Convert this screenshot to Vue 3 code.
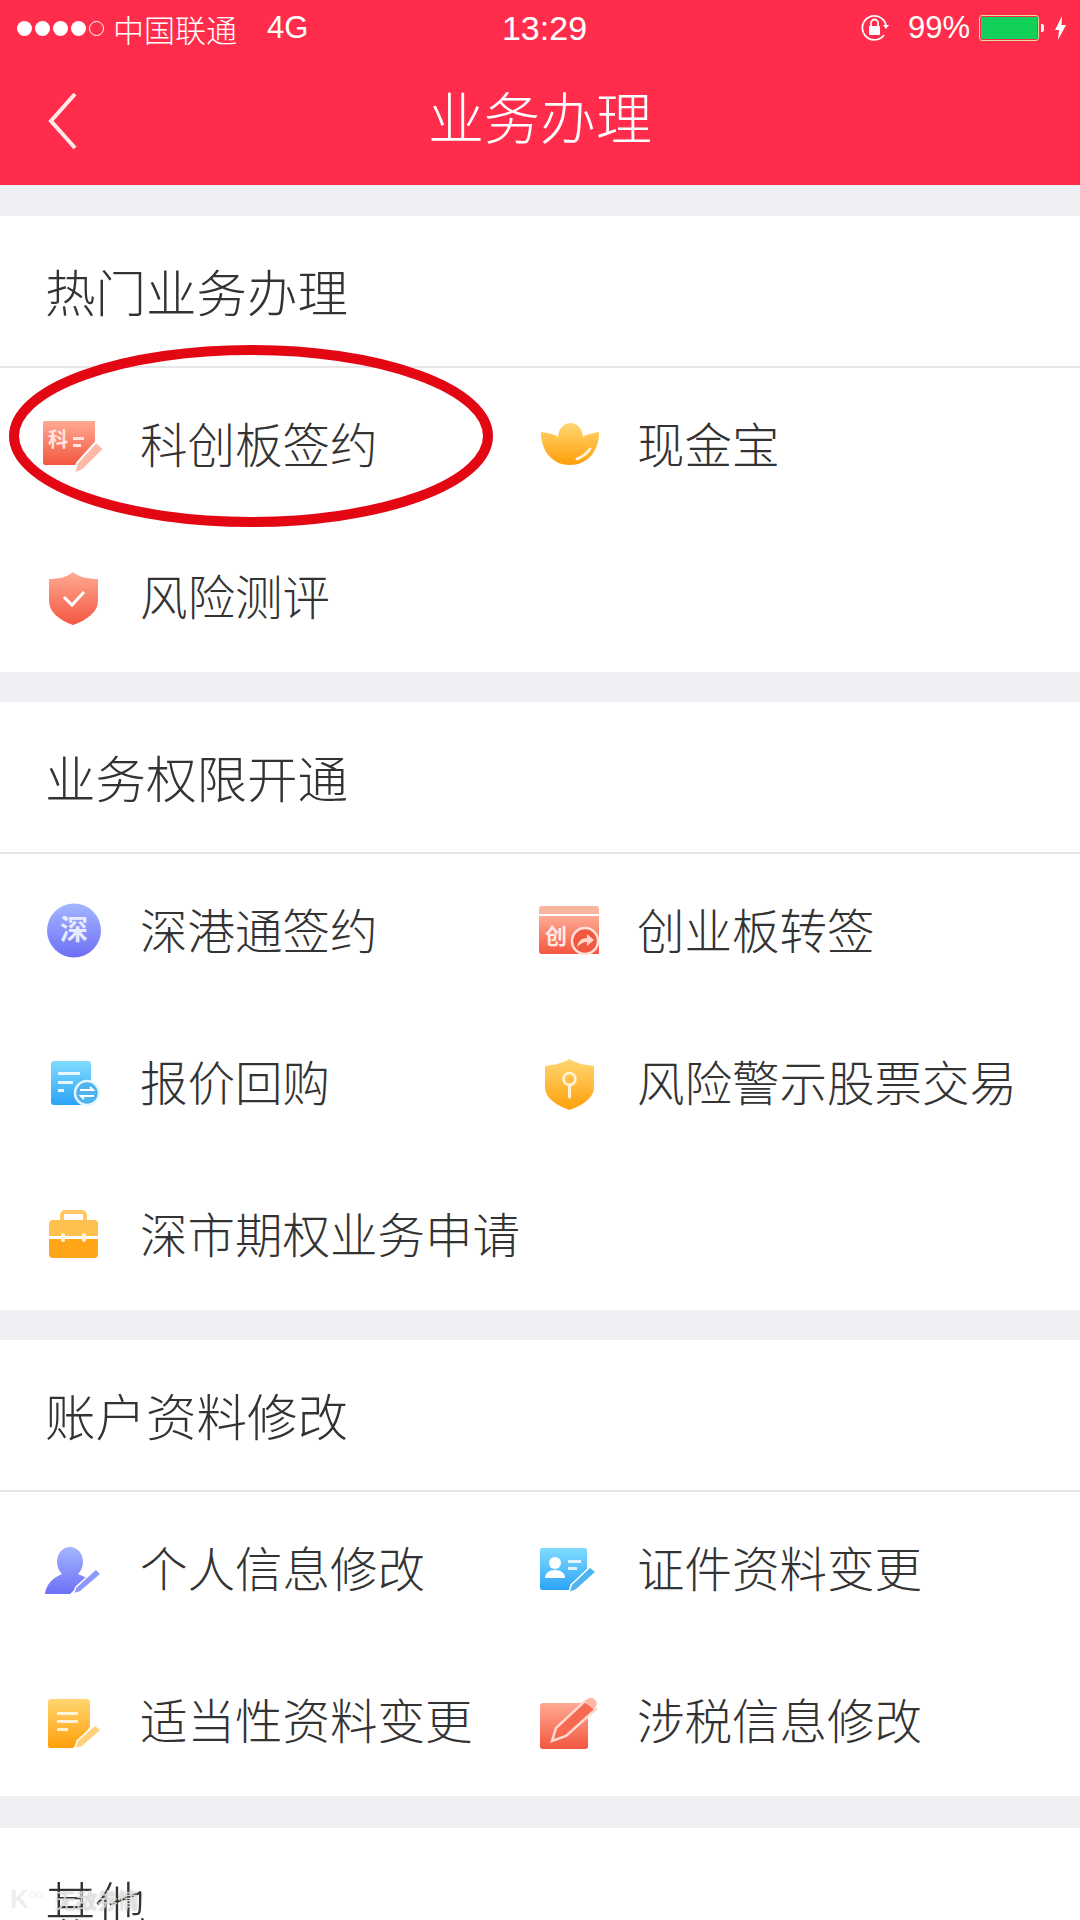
<script setup>
const sections = [
  {
    title: '热门业务办理',
    items: [
      { text: '科创板签约', icon: 'ke' },
      { text: '现金宝', icon: 'gold' },
      { text: '风险测评', icon: 'shield' },
    ],
  },
  {
    title: '业务权限开通',
    items: [
      { text: '深港通签约', icon: 'shen' },
      { text: '创业板转签', icon: 'chuang' },
      { text: '报价回购', icon: 'report' },
      { text: '风险警示股票交易', icon: 'key' },
      { text: '深市期权业务申请', icon: 'case' },
    ],
  },
  {
    title: '账户资料修改',
    items: [
      { text: '个人信息修改', icon: 'person' },
      { text: '证件资料变更', icon: 'idcard' },
      { text: '适当性资料变更', icon: 'note' },
      { text: '涉税信息修改', icon: 'edit' },
    ],
  },
  { title: '其他', items: [] },
]
</script>

<template>
  <div class="page">
    <header class="top">
      <div class="status">
        <div class="status-left">
          <span class="signal">
            <i v-for="n in 4" :key="n" class="dot"></i>
            <i class="dot empty"></i>
          </span>
          <span class="carrier">中国联通</span>
          <span class="net">4G</span>
        </div>
        <div class="time">13:29</div>
        <div class="status-right">
          <svg class="lock" width="30" height="28" viewBox="0 0 30 28">
            <path d="M24 21A12 12 0 1 1 26 11" fill="none" stroke="#fff" stroke-width="1.800" />
            <path d="M23 11h6l-3 4z" fill="#fff" />
            <rect x="9" y="12" width="11" height="9" rx="1" fill="#fff" />
            <path d="M11 12V9a3.500 3.500 0 0 1 7 0v3" fill="none" stroke="#fff" stroke-width="1.800" />
          </svg>
          <span class="pct">99%</span>
          <span class="battery"><i class="battery-fill"></i></span>
          <span class="battery-tip"></span>
          <svg class="bolt" width="11" height="24" viewBox="0 0 11 24">
            <path d="M7 0L0 14h4l-1 10 8-15H6.500z" fill="#fff" />
          </svg>
        </div>
      </div>
      <div class="nav">
        <svg class="back" width="30" height="58" viewBox="0 0 30 58">
          <path d="M27 2L3 29l24 27" fill="none" stroke="#ffe9e9" stroke-width="4" />
        </svg>
        <h1 class="nav-title">业务办理</h1>
        <span></span>
      </div>
    </header>

    <main class="content">
      <section v-for="sec in sections" :key="sec.title" class="card">
        <h2 class="card-title">{{ sec.title }}</h2>
        <div v-if="sec.items.length" class="grid">
          <div v-for="item in sec.items" :key="item.text" class="item">
            <svg class="icon" width="70" height="60" viewBox="0 0 70 60">
              <defs>
                <linearGradient :id="'g-' + item.icon" x1="0" y1="0" x2="0" y2="1">
                  <stop v-if="['ke', 'shield', 'chuang', 'edit'].includes(item.icon)" offset="0" stop-color="#ffaa94" />
                  <stop v-if="['ke', 'shield', 'chuang', 'edit'].includes(item.icon)" offset="1" stop-color="#f3563f" />
                  <stop v-if="['gold', 'key', 'case', 'note'].includes(item.icon)" offset="0" stop-color="#ffd672" />
                  <stop v-if="['gold', 'key', 'case', 'note'].includes(item.icon)" offset="1" stop-color="#ff9f0a" />
                  <stop v-if="['report', 'idcard'].includes(item.icon)" offset="0" stop-color="#80dcff" />
                  <stop v-if="['report', 'idcard'].includes(item.icon)" offset="1" stop-color="#2ba4f6" />
                  <stop v-if="['shen', 'person'].includes(item.icon)" offset="0" stop-color="#a4b6ff" />
                  <stop v-if="['shen', 'person'].includes(item.icon)" offset="1" stop-color="#6d6ff5" />
                </linearGradient>
              </defs>
              <g v-if="item.icon === 'ke'">
                <path d="M9 7h50v26L39 51H9a2 2 0 0 1-2-2V9a2 2 0 0 1 2-2z" fill="url(#g-ke)" />
                <text x="12" y="33" class="glyph" font-size="20" fill="#ffe3dc">科</text>
                <path d="M37 23h11v3H37zM37 30h8v3h-8z" fill="#ffe3dc" />
                <path d="M60 28l8 7-21 21-9 4 3-11z" fill="#ffb8a6" stroke="#fff" stroke-width="2" />
              </g>
              <g v-if="item.icon === 'gold'">
                <path d="M8 18C15 19 21 20 25 23 26 14 31 9 37.500 9 44 9 49 14 50 23 54 20 60 19 66 18 66 38 54 51 37 51 20 51 8 38 8 18z" fill="url(#g-gold)" />
                <path d="M44 45Q52 42 57 35" fill="none" stroke="#fff3d8" stroke-width="3" stroke-linecap="round" />
              </g>
              <g v-if="item.icon === 'shield'">
                <path d="M37 6c6 5 15 7 25 7v22c0 11-11 19-25 24-14-5-24-13-24-24V13c10 0 18-2 24-7z" fill="url(#g-shield)" />
                <path d="M28 31l8 8 12-13" fill="none" stroke="#fff" stroke-width="3" />
              </g>
              <g v-if="item.icon === 'shen'">
                <circle cx="38" cy="30.500" r="27" fill="url(#g-shen)" />
                <text x="24" y="40" class="glyph" font-size="28" fill="#e8ebff">深</text>
              </g>
              <g v-if="item.icon === 'report'">
                <rect x="15" y="9" width="40" height="44" rx="3" fill="url(#g-report)" />
                <path d="M22 20h22v3H22zM22 29h15v3H22zM22 37h6v3h-6z" fill="#fff" opacity=".85" />
                <circle cx="51" cy="41" r="12" fill="#4fb3ee" stroke="#e6f6ff" stroke-width="2.500" />
                <path d="M44 38h13l-3-3M58 44H45l3 3" fill="none" stroke="#fff" stroke-width="2" />
              </g>
              <g v-if="item.icon === 'case'">
                <path d="M26 16v-5a3 3 0 0 1 3-3h17a3 3 0 0 1 3 3v5" fill="none" stroke="#ffc861" stroke-width="4" />
                <path d="M17 16h41a4 4 0 0 1 4 4v12H13V20a4 4 0 0 1 4-4z" fill="#ffc04f" />
                <path d="M13 35h49v15a4 4 0 0 1-4 4H17a4 4 0 0 1-4-4z" fill="#ffa517" />
                <rect x="25" y="29" width="4" height="9" rx="2" fill="#fff2d8" />
                <rect x="46" y="29" width="4" height="9" rx="2" fill="#fff2d8" />
              </g>
              <g v-if="item.icon === 'chuang'">
                <path d="M9 6h54a3 3 0 0 1 3 3v5H6V9a3 3 0 0 1 3-3z" fill="#f6b59c" />
                <path d="M6 16h60v38H9a3 3 0 0 1-3-3z" fill="url(#g-chuang)" />
                <text x="12" y="44" class="glyph" font-size="22" fill="#ffe9e3">创</text>
                <circle cx="52" cy="41" r="13" fill="#f0593f" stroke="#ffe2da" stroke-width="2.500" />
                <path d="M44 47c1-6 5-9 10-9v-4l7 6-7 6v-4c-4 0-7 2-10 5z" fill="#ffd6cb" />
              </g>
              <g v-if="item.icon === 'key'">
                <path d="M36.500 7c6 4 15 6 24.500 7v21c0 11-11 18-24.500 23C23 53 12 46 12 35V14c9-1 18-3 24.500-7z" fill="url(#g-key)" />
                <circle cx="36.500" cy="27" r="6" fill="none" stroke="#fff3d6" stroke-width="2.500" />
                <path d="M36.500 33v12" stroke="#fff3d6" stroke-width="3" stroke-linecap="round" />
              </g>
              <g v-if="item.icon === 'person'">
                <path d="M34 9c8 0 13 7 13 15 0 5-2 9-5 12l9 4-17 16H9c1-9 7-16 17-20-3-3-5-7-5-12 0-8 5-15 13-15z" fill="url(#g-person)" />
                <path d="M60 31l5 5-21 18-7 2 3-7z" fill="#8c99fb" stroke="#fff" stroke-width="1.500" />
              </g>
              <g v-if="item.icon === 'idcard'">
                <path d="M9 10h43a2 2 0 0 1 2 2v22L37 52H9a2 2 0 0 1-2-2V12a2 2 0 0 1 2-2z" fill="url(#g-idcard)" />
                <circle cx="22" cy="25" r="6" fill="#fff" />
                <path d="M12 40c0-5 4-8 10-8s10 3 10 8z" fill="#fff" />
                <path d="M35 22h13v3H35zM35 29h9v3h-9z" fill="#fff" opacity=".8" />
                <path d="M57 29l6 5-20 18-7 3 2-8z" fill="#4eb4f0" stroke="#fff" stroke-width="1.500" />
              </g>
              <g v-if="item.icon === 'note'">
                <path d="M14 9h37a3 3 0 0 1 3 3v25L37 58H14a2 2 0 0 1-2-2V12a3 3 0 0 1 3-3z" fill="url(#g-note)" />
                <path d="M21 22h21v3H21zM21 30h21v3H21zM21 38h11v3H21z" fill="#fff" opacity=".8" />
                <path d="M59 35l6 5-19 17-7 2 2-8z" fill="#ffd27a" stroke="#fff" stroke-width="1.500" />
              </g>
              <g v-if="item.icon === 'edit'">
                <rect x="7" y="13" width="48" height="46" rx="3" fill="url(#g-edit)" />
                <path d="M52 11l11 8-30 27-14 5 4-13z" fill="#f56a50" stroke="#ffd9cf" stroke-width="2.500" />
                <path d="M52 11l4-3c2-1 5 0 7 3 1 2 1 4 0 5l-3 3z" fill="#ffb5a3" />
              </g>
            </svg>
            <span class="label">{{ item.text }}</span>
          </div>
        </div>
      </section>
    </main>

    <svg class="circle-mark" width="496" height="192" viewBox="0 0 496 192">
      <ellipse cx="248" cy="96" rx="237" ry="86" fill="none" stroke="#e30613" stroke-width="10" />
    </svg>

    <div class="watermark">
      <span class="wm-logo">K<sup class="wm-oo">oo</sup></span>
      <span class="wm-text">无敌券情</span>
    </div>
  </div>
</template>

<style>
html,
body {
  margin: 0;
  background: #efeff4;
}
</style>

<style scoped>
.page {
  position: relative;
  width: 1080px;
  height: 1920px;
  overflow: hidden;
  background: #efeff4;
  font-family: "Noto Sans CJK SC", "Liberation Sans", sans-serif;
  color: #333;
}

.top {
  height: 185px;
  background: #ff2d4b;
  color: #fff;
}

.status {
  display: grid;
  grid-template-columns: 1fr auto 1fr;
  align-items: center;
  height: 56px;
  padding: 0 14px 0 17px;
  font-family: "Liberation Sans", "Noto Sans CJK SC", sans-serif;
  font-size: 31px;
}

.status-left,
.status-right {
  display: flex;
  align-items: center;
}

.status-right {
  justify-content: flex-end;
}

.signal {
  display: flex;
  gap: 3px;
  margin-right: 9px;
}

.dot {
  width: 15px;
  height: 15px;
  border-radius: 50%;
  background: #fff;
}

.dot.empty {
  box-sizing: border-box;
  background: none;
  border: 1px solid #fff;
}

.carrier {
  font-family: "Noto Sans CJK SC", sans-serif;
  font-weight: 300;
  margin-right: 30px;
}

.time {
  font-size: 34px;
  margin-left: 6px;
}

.lock {
  margin-right: 18px;
}

.pct {
  margin-right: 9px;
}

.battery {
  box-sizing: border-box;
  width: 60px;
  height: 26px;
  padding: 1px;
  border: 1px solid #e8d9a0;
  border-radius: 3px;
}

.battery-fill {
  display: block;
  height: 100%;
  background: #12d15a;
}

.battery-tip {
  width: 3px;
  height: 8px;
  margin-left: 2px;
  background: #fff;
  border-radius: 0 2px 2px 0;
}

.bolt {
  margin-left: 11px;
}

.nav {
  display: grid;
  grid-template-columns: 1fr auto 1fr;
  align-items: center;
  height: 129px;
  padding: 0 0 11px 48px;
  box-sizing: border-box;
}

.back {
  margin-top: 12px;
}

.nav-title {
  margin: 0 0 0 -48px;
  font-size: 56px;
  font-weight: 300;
  line-height: 1;
}

.content {
  display: flex;
  flex-direction: column;
  gap: 30px;
  padding-top: 31px;
}

.card {
  background: #fff;
}

.card:last-child {
  margin-top: 2px;
}

.card-title {
  box-sizing: border-box;
  height: 152px;
  margin: 0;
  padding: 0 0 0 45px;
  border-bottom: 2px solid #e6e6e8;
  font-size: 50.500px;
  font-weight: 300;
  line-height: 148px;
}

.grid {
  display: grid;
  grid-template-columns: 497px 583px;
  grid-auto-rows: 152px;
}

.item {
  display: flex;
  align-items: center;
  gap: 34px;
  padding-left: 36px;
  min-width: 0;
}

.icon {
  flex: none;
}

.label {
  margin-bottom: 4px;
  font-size: 47.500px;
  font-weight: 300;
  white-space: nowrap;
}

.glyph {
  font-family: "Noto Sans CJK SC", sans-serif;
  font-weight: 700;
}

.circle-mark {
  position: absolute;
  left: 3px;
  top: 340px;
}

.watermark {
  position: absolute;
  left: 10px;
  top: 1886px;
  display: flex;
  align-items: center;
  gap: 8px;
  color: rgba(235, 235, 235, 0.82);
  line-height: 1;
}

.wm-logo {
  width: 37px;
  font-family: "Liberation Sans", sans-serif;
  font-size: 26px;
  font-weight: 700;
}

.wm-oo {
  font-size: 13px;
  font-weight: 400;
  vertical-align: 10px;
}

.wm-text {
  font-size: 21px;
  text-shadow: 0 0 2px rgba(120, 120, 120, 0.6);
}
</style>
